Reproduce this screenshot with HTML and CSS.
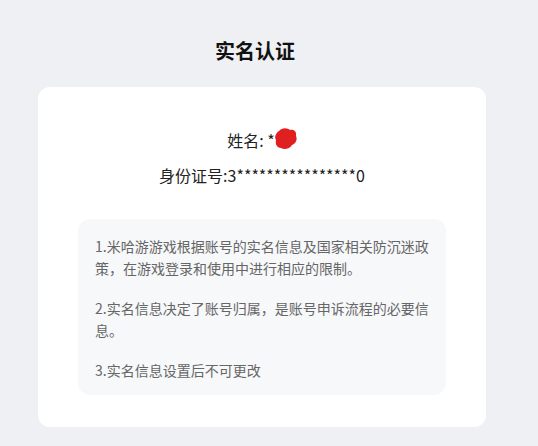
FILE: index.html
```html
<!DOCTYPE html>
<html lang="zh-CN">
<head>
    <meta charset="UTF-8">
    <meta name="viewport" content="width=device-width, initial-scale=1.0">
    <title>实名认证</title>
    <link rel="stylesheet" href="styles.css">
</head>
<body>
    <div class="page">
        <h1 class="page-title">实名认证</h1>

        <div class="card">
            <p class="name-line">姓名: *<span class="mask">
                <svg width="24" height="26" viewBox="0 0 24 26">
                    <path d="M5 5 C8 1 14 2 16 4 C20 3 23 6 22 10 C24 14 21 18 18 19 C16 23 10 24 7 22 C3 22 1 18 2 14 C0 11 2 7 5 5 Z" fill="#e02020"/>
                </svg>
            </span></p>
            <p class="id-line">身份证号:3****************0</p>

            <div class="notice">
                <p>1.米哈游游戏根据账号的实名信息及国家相关防沉迷政策，在游戏登录和使用中进行相应的限制。</p>
                <p>2.实名信息决定了账号归属，是账号申诉流程的必要信息。</p>
                <p>3.实名信息设置后不可更改</p>
            </div>
        </div>
    </div>
</body>
</html>
```

FILE: styles.css
```css
* {
    margin: 0;
    padding: 0;
    box-sizing: border-box;
}

body {
    font-family: "Noto Sans CJK SC", "Noto Sans", sans-serif;
    background-color: #eff0f4;
    color: #222;
}

.page {
    width: 524px;
}

.page-title {
    font-size: 20px;
    font-weight: 700;
    line-height: 28px;
    text-align: center;
    color: #111;
    margin-top: 37px;
    margin-bottom: 22px;
    padding-right: 14px;
}

.card {
    margin: 0 38px;
    background: #fff;
    border-radius: 12px;
    padding: 41px 40px 32px;
}

.name-line,
.id-line {
    font-size: 16px;
    line-height: 24px;
    text-align: center;
}

.mask {
    display: inline-block;
    width: 22px;
    height: 24px;
    vertical-align: top;
    position: relative;
}

.mask svg {
    position: absolute;
    left: -1px;
    top: -2px;
}

.id-line {
    margin-top: 11px;
    margin-bottom: 32px;
}

.notice {
    background-color: #f7f8fa;
    border-radius: 12px;
    padding: 16px 17px 14px;
    font-size: 14px;
    line-height: 22px;
    color: #666;
}

.notice p + p {
    margin-top: 18px;
}
```
